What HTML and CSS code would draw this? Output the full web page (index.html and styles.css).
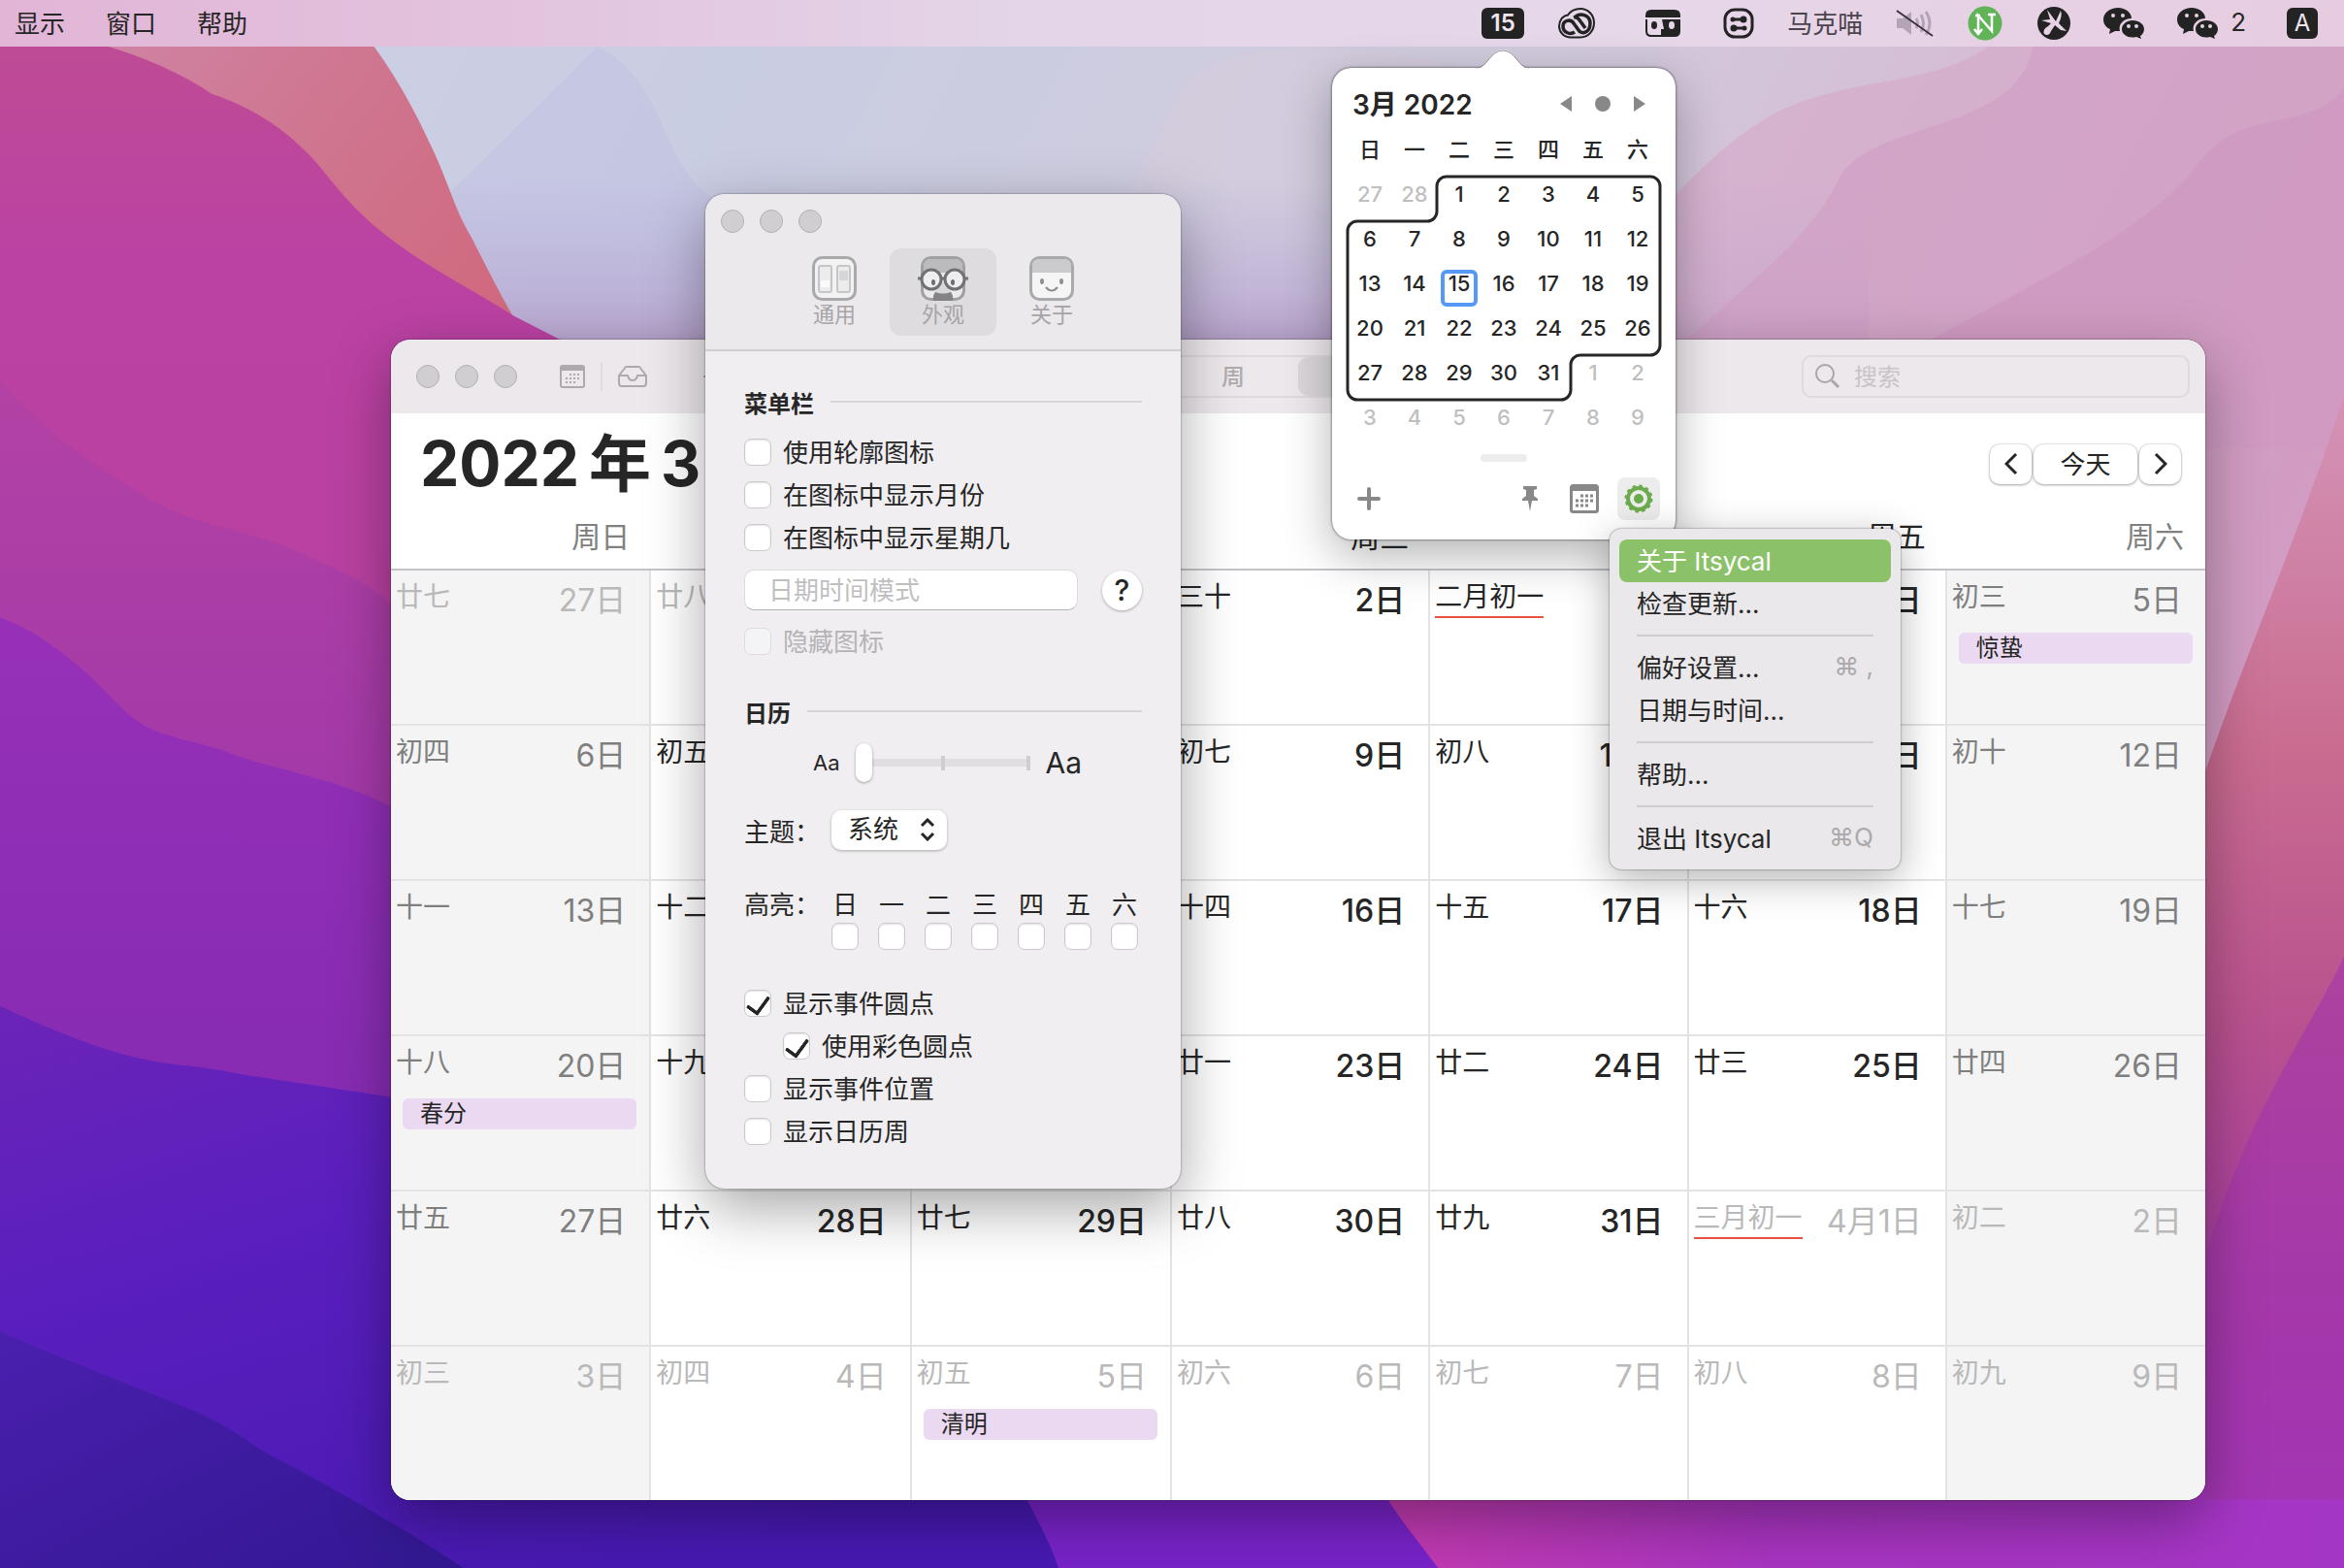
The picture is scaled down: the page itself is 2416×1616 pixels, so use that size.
FILE: index.html
```html
<!DOCTYPE html>
<html lang="zh-CN">
<head>
    <meta charset="UTF-8">
    <meta name="viewport" content="width=device-width, initial-scale=1.0">
    <title>日历</title>
    <link rel="stylesheet" href="styles.css">
</head>
<body>

    <!-- wallpaper -->
    <svg class="wallpaper" viewBox="0 0 1568 1049" preserveAspectRatio="none" aria-hidden="true">
        <defs>
            <linearGradient id="sky" x1="0" y1="0" x2="1" y2="0.35">
                <stop offset="0" stop-color="#cdd0e6"/>
                <stop offset="0.3" stop-color="#c9cde2"/>
                <stop offset="0.6" stop-color="#d2cbdd"/>
                <stop offset="1" stop-color="#d9a9c9"/>
            </linearGradient>
            <linearGradient id="haze" x1="0" y1="0" x2="0" y2="1">
                <stop offset="0" stop-color="#b6b0dc" stop-opacity="0"/>
                <stop offset="1" stop-color="#b9a2cc"/>
            </linearGradient>
            <linearGradient id="coral" x1="0" y1="0" x2="1" y2="0.6">
                <stop offset="0" stop-color="#cf84a4"/>
                <stop offset="0.5" stop-color="#cf7690"/>
                <stop offset="1" stop-color="#d06a80"/>
            </linearGradient>
            <linearGradient id="magenta" x1="0" y1="0" x2="0" y2="1">
                <stop offset="0" stop-color="#be4c94"/>
                <stop offset="0.35" stop-color="#bb42a3"/>
                <stop offset="1" stop-color="#b840a0"/>
            </linearGradient>
            <linearGradient id="plum" x1="0" y1="0" x2="0" y2="1">
                <stop offset="0" stop-color="#b342a4"/>
                <stop offset="1" stop-color="#9f37aa"/>
            </linearGradient>
            <linearGradient id="purple" x1="0" y1="0" x2="0" y2="1">
                <stop offset="0" stop-color="#9730b8"/>
                <stop offset="1" stop-color="#842bb2"/>
            </linearGradient>
            <linearGradient id="violet" x1="0" y1="0" x2="0.6" y2="1">
                <stop offset="0" stop-color="#6b24b8"/>
                <stop offset="0.4" stop-color="#5a1fbe"/>
                <stop offset="1" stop-color="#4719b2"/>
            </linearGradient>
            <linearGradient id="night" x1="0" y1="0" x2="1" y2="1">
                <stop offset="0" stop-color="#4a1fae"/>
                <stop offset="1" stop-color="#321892"/>
            </linearGradient>
            <linearGradient id="rose" x1="0" y1="0" x2="0" y2="1">
                <stop offset="0" stop-color="#d494b6"/>
                <stop offset="0.3" stop-color="#c96c90"/>
                <stop offset="0.55" stop-color="#b8508f"/>
                <stop offset="0.8" stop-color="#a63aa8"/>
                <stop offset="1" stop-color="#a234c2"/>
            </linearGradient>
            <linearGradient id="orchid" x1="0" y1="0" x2="1" y2="0">
                <stop offset="0" stop-color="#c43bb0"/>
                <stop offset="0.4" stop-color="#a834c0"/>
                <stop offset="1" stop-color="#a436c6"/>
            </linearGradient>
        </defs>
        <rect width="1568" height="1049" fill="url(#sky)"/>
        <path d="M400 31C450 60 440 110 480 135L900 240H340L300 130Z" fill="#c3c3e2" opacity=".6"/>
        <path d="M790 60C800 40 850 20 960 40L1200 240H700Z" fill="#d6cbdc" opacity=".5"/>
        <path d="M250 120H1250V240H250Z" fill="url(#haze)"/>
        <path d="M1020 240C1090 170 1130 110 1180 80S1290 60 1330 31H1568V300H1020Z" fill="#d6a9c9" opacity=".65"/>
        <path d="M1120 235C1180 180 1210 160 1230 120S1350 90 1360 31H1568V300H1120Z" fill="#d09ac2" opacity=".5"/>
        <path d="M1290 228C1380 180 1440 150 1470 110S1540 90 1568 60V700H1290Z" fill="#cf98c0" opacity=".8"/>
        <path d="M1568 265C1530 380 1500 440 1460 560V1049H1568Z" fill="url(#rose)"/>
        <path d="M1380 1049L1460 900C1490 760 1540 700 1568 640V1049Z" fill="#a336ae" opacity=".6"/>
        <path d="M60 20H242C265 50 278 75 289 99C300 122 304 140 315 158C324 176 334 196 344 213L360 240H200Z" fill="url(#coral)"/>
        <path d="M0 20H40L72 31C95 38 120 48 142 63C170 72 198 90 220 119C235 138 250 152 267 164C295 184 320 196 343 211L380 230V460H0Z" fill="url(#magenta)"/>
        <path d="M0 255C20 275 40 295 63 310C85 325 105 338 126 346S168 356 189 365S240 385 262 404L320 440V600H0Z" fill="url(#plum)"/>
        <path d="M0 413C20 420 36 432 53 446C70 460 85 482 104 489S140 498 157 505S230 522 262 540L320 570V780H0Z" fill="url(#purple)"/>
        <path d="M0 673C28 686 55 698 85 706S130 712 157 718L262 734L400 760V990H720V1049H0Z" fill="url(#violet)"/>
        <path d="M0 891C40 908 80 924 120 940S165 966 189 978S270 1022 310 1049H0Z" fill="url(#night)"/>
        <path d="M680 990H980V1049H708C702 1030 690 1010 680 990Z" fill="#7823c9"/>
        <path d="M920 990H1475V1003H1568V1049H962C948 1030 935 1015 920 990Z" fill="url(#orchid)"/>
    </svg>

    <!-- menu bar -->
    <header class="menubar">
        <nav class="menubar-left">
            <button>显示</button>
            <button>窗口</button>
            <button>帮助</button>
        </nav>
        <div class="menubar-right">
            <span class="badge">15</span>
            <svg width="40" height="34" viewBox="0 0 40 34">
                <path d="M14 31.500C7 31.500 2 26 2 20C2 14 6 9 11 8.500C14 4 19 2 24 2C32 2 38 8.500 38 16.500C38 25 32 31.500 24 31.500Z" fill="none" stroke="#232323" stroke-width="2"/>
                <path d="M19 10C23 6 34 8 34 17C34 27 25 29 22 24L17 17C14 12 6 14 6 20C6 27 14 29 18 26" fill="none" stroke="#232323" stroke-width="3.500"/>
                <path d="M17 11C20 10 22 12 24 15L29 22" fill="none" stroke="#232323" stroke-width="3.500"/>
            </svg>
            <svg class="face-icon" width="36" height="28" viewBox="0 0 36 28">
                <path d="M6 0H30Q36 0 36 6V8H0V6Q0 0 6 0Z" fill="#232323"/>
                <path d="M1 10V22Q1 27 6 27H18" fill="none" stroke="#232323" stroke-width="2"/>
                <path d="M17 10H36V22Q36 28 30 28H16V20H19Z" fill="#232323"/>
                <ellipse cx="9" cy="16" rx="3" ry="4" fill="#232323"/>
                <ellipse cx="27" cy="16" rx="3" ry="4" fill="#e4d6e8"/>
            </svg>
            <svg width="32" height="32" viewBox="0 0 32 32">
                <rect x="2" y="2" width="28" height="28" rx="10" fill="none" stroke="#232323" stroke-width="3"/>
                <path d="M9 12H20M12 21H23" stroke="#232323" stroke-width="3"/>
                <circle cx="21" cy="12" r="3.500" fill="#232323"/><circle cx="11" cy="21" r="3.500" fill="#232323"/>
                <circle cx="10" cy="12" r="2.500" fill="#232323"/><circle cx="22" cy="21" r="2.500" fill="#232323"/>
            </svg>
            <span class="menubar-name">马克喵</span>
            <svg width="40" height="30" viewBox="0 0 40 30">
                <path d="M1 10H7L16 3V27L7 20H1Z" fill="#b5a3b7"/>
                <path d="M21 10Q24 15 21 20M26 6Q31 15 26 24M31 3Q39 15 31 27" fill="none" stroke="#b5a3b7" stroke-width="3"/>
                <path d="M1 2L38 28" stroke="#3b343c" stroke-width="2"/>
            </svg>
            <svg width="38" height="36" viewBox="0 0 38 36">
                <circle cx="18" cy="18" r="17.500" fill="#60b357"/>
                <path d="M11 28V10L25 26V9M8 10H13M21 9H29M7 24L11 29L15 24" fill="none" stroke="#fff" stroke-width="2.500"/>
            </svg>
            <svg width="34" height="34" viewBox="0 0 34 34">
                <circle cx="17" cy="17" r="17" fill="#232323"/>
                <path d="M10 3L19 15L24 4Q26 9 22 17L30 25L24 24L18 19L14 25Q12 31 7 28Q5 23 11 20L14 17L4 14L13 13Z" fill="#e6d2e4"/>
            </svg>
            <svg width="42" height="32" viewBox="0 0 42 32">
                <path d="M15 0C23 0 29 5 29 11C21 11 15 17 17 24L12 24L6 27L7 22C2 20 0 16 0 12C0 5 7 0 15 0Z" fill="#232323"/>
                <path d="M30 13C37 13 42 17 42 22C42 25 40 28 38 29L39 32L34 30C26 32 19 28 19 22C19 17 24 13 30 13Z" fill="#232323"/>
                <circle cx="10" cy="8" r="2" fill="#e6d2e4"/><circle cx="20" cy="8" r="2" fill="#e6d2e4"/>
                <circle cx="26" cy="19" r="2" fill="#e6d2e4"/><circle cx="34" cy="19" r="2" fill="#e6d2e4"/>
            </svg>
            <span class="wechat-count">
                <svg width="42" height="32" viewBox="0 0 42 32">
                    <path d="M15 0C23 0 29 5 29 11C21 11 15 17 17 24L12 24L6 27L7 22C2 20 0 16 0 12C0 5 7 0 15 0Z" fill="#232323"/>
                    <path d="M30 13C37 13 42 17 42 22C42 25 40 28 38 29L39 32L34 30C26 32 19 28 19 22C19 17 24 13 30 13Z" fill="#232323"/>
                    <circle cx="10" cy="8" r="2" fill="#e6d2e4"/><circle cx="20" cy="8" r="2" fill="#e6d2e4"/>
                    <circle cx="26" cy="19" r="2" fill="#e6d2e4"/><circle cx="34" cy="19" r="2" fill="#e6d2e4"/>
                </svg>
                <span>2</span>
            </span>
            <span class="badge badge-input">A</span>
        </div>
    </header>

    <!-- calendar window -->
    <main class="window calendar">
        <div class="toolbar">
            <div class="toolbar-left">
                <div class="lights"><i></i><i></i><i></i></div>
                <svg width="26" height="24" viewBox="0 0 26 24">
                    <rect x="1" y="1" width="24" height="22" rx="2" fill="none" stroke="#aea9ad" stroke-width="2"/>
                    <path d="M1 1H25V6H1Z" fill="#aea9ad"/>
                    <path d="M10 10H21M6 14H21M6 18H17" stroke="#aea9ad" stroke-width="2" stroke-dasharray="2 2"/>
                </svg>
                <span class="divider"></span>
                <svg width="30" height="22" viewBox="0 0 30 22">
                    <path d="M1 10L8 1H22L29 10V18Q29 21 26 21H4Q1 21 1 18ZM1 10H10Q11 15 15 15T20 10H29" fill="none" stroke="#aea9ad" stroke-width="2" stroke-linejoin="round"/>
                </svg>
                <svg class="add-icon" width="24" height="24" viewBox="0 0 24 24">
                    <path d="M12 0V24M0 12H24" stroke="#aea9ad" stroke-width="2"/>
                </svg>
            </div>
            <div class="segmented">
                <button aria-label="日"></button>
                <button>周</button>
                <button class="selected" aria-label="月"></button>
                <button aria-label="年"></button>
            </div>
            <div class="toolbar-right">
                <label class="search">
                    <svg width="26" height="26" viewBox="0 0 26 26">
                        <circle cx="10" cy="10" r="9" fill="none" stroke="#aaa5a9" stroke-width="2"/>
                        <path d="M17 17L24 24" stroke="#aaa5a9" stroke-width="3"/>
                    </svg>
                    <input type="text" placeholder="搜索">
                </label>
            </div>
        </div>

        <div class="month-head">
            <h1>2022<span>年</span>3<span>月</span></h1>
            <div class="month-nav">
                <button aria-label="上个月"><svg width="14" height="24" viewBox="0 0 14 24"><path d="M12 2L2 12L12 22" fill="none" stroke="#262626" stroke-width="3"/></svg></button>
                <button class="today">今天</button>
                <button aria-label="下个月"><svg width="14" height="24" viewBox="0 0 14 24"><path d="M2 2L12 12L2 22" fill="none" stroke="#262626" stroke-width="3"/></svg></button>
            </div>
        </div>

        <table class="month">
            <thead>
                <tr><th>周日</th><th></th><th></th><th>周三</th><th></th><th>周五</th><th>周六</th></tr>
            </thead>
            <tbody>
                <tr>
                    <td class="other"><div class="day"><span>廿七</span><b>27日</b></div></td>
                    <td class="other"><div class="day"><span>廿八</span></div></td>
                    <td></td>
                    <td><div class="day"><span>三十</span><b>2日</b></div></td>
                    <td><div class="day"><span class="first">二月初一</span></div></td>
                    <td><div class="day"><span></span><b>4日</b></div></td>
                    <td><div class="day"><span>初三</span><b>5日</b></div><div class="event">惊蛰</div></td>
                </tr>
                <tr>
                    <td><div class="day"><span>初四</span><b>6日</b></div></td>
                    <td><div class="day"><span>初五</span></div></td>
                    <td></td>
                    <td><div class="day"><span>初七</span><b>9日</b></div></td>
                    <td><div class="day"><span>初八</span><b>10日</b></div></td>
                    <td><div class="day"><span></span><b>11日</b></div></td>
                    <td><div class="day"><span>初十</span><b>12日</b></div></td>
                </tr>
                <tr>
                    <td><div class="day"><span>十一</span><b>13日</b></div></td>
                    <td><div class="day"><span>十二</span></div></td>
                    <td></td>
                    <td><div class="day"><span>十四</span><b>16日</b></div></td>
                    <td><div class="day"><span>十五</span><b>17日</b></div></td>
                    <td><div class="day"><span>十六</span><b>18日</b></div></td>
                    <td><div class="day"><span>十七</span><b>19日</b></div></td>
                </tr>
                <tr>
                    <td><div class="day"><span>十八</span><b>20日</b></div><div class="event">春分</div></td>
                    <td><div class="day"><span>十九</span></div></td>
                    <td></td>
                    <td><div class="day"><span>廿一</span><b>23日</b></div></td>
                    <td><div class="day"><span>廿二</span><b>24日</b></div></td>
                    <td><div class="day"><span>廿三</span><b>25日</b></div></td>
                    <td><div class="day"><span>廿四</span><b>26日</b></div></td>
                </tr>
                <tr>
                    <td><div class="day"><span>廿五</span><b>27日</b></div></td>
                    <td><div class="day"><span>廿六</span><b>28日</b></div></td>
                    <td><div class="day"><span>廿七</span><b>29日</b></div></td>
                    <td><div class="day"><span>廿八</span><b>30日</b></div></td>
                    <td><div class="day"><span>廿九</span><b>31日</b></div></td>
                    <td class="other"><div class="day"><span class="first">三月初一</span><b>4月1日</b></div></td>
                    <td class="other"><div class="day"><span>初二</span><b>2日</b></div></td>
                </tr>
                <tr>
                    <td class="other"><div class="day"><span>初三</span><b>3日</b></div></td>
                    <td class="other"><div class="day"><span>初四</span><b>4日</b></div></td>
                    <td class="other"><div class="day"><span>初五</span><b>5日</b></div><div class="event">清明</div></td>
                    <td class="other"><div class="day"><span>初六</span><b>6日</b></div></td>
                    <td class="other"><div class="day"><span>初七</span><b>7日</b></div></td>
                    <td class="other"><div class="day"><span>初八</span><b>8日</b></div></td>
                    <td class="other"><div class="day"><span>初九</span><b>9日</b></div></td>
                </tr>
            </tbody>
        </table>
    </main>

    <!-- preferences window -->
    <section class="window prefs">
        <div class="prefs-head">
            <div class="lights"><i></i><i></i><i></i></div>
            <div class="tabs">
                <button>
                    <svg width="46" height="46" viewBox="0 0 46 46">
                        <rect x="1.500" y="1.500" width="43" height="43" rx="9" fill="#f3f2f3" stroke="#a9a8aa" stroke-width="3"/>
                        <rect x="7" y="10" width="13" height="27" rx="2" fill="#ececed" stroke="#c6c5c7" stroke-width="2"/>
                        <rect x="26" y="10" width="13" height="27" rx="2" fill="#ececed" stroke="#c6c5c7" stroke-width="2"/>
                        <path d="M9 25H18V32H9Z" fill="#fafafa"/><path d="M28 15H37V25H28Z" fill="#d6d5d7"/>
                    </svg>
                    通用
                </button>
                <button class="active">
                    <svg width="52" height="46" viewBox="0 0 52 46">
                        <rect x="4.500" y="1.500" width="43" height="43" rx="9" fill="#eae9eb" stroke="#a09fa1" stroke-width="3"/>
                        <path d="M6 17V10Q6 3 13 3H39Q46 3 46 10V17Z" fill="#bbbabc"/>
                        <path d="M23 27Q20 36 16 38H36Q32 36 29 27Z" fill="#d8d7d9"/>
                        <path d="M18 37Q26 40 34 37Q37 41 36 46H16Q15 41 18 37Z" fill="#838284"/>
                        <circle cx="14" cy="24" r="10" fill="#eeedef" stroke="#717072" stroke-width="3"/>
                        <circle cx="38" cy="24" r="10" fill="#eeedef" stroke="#717072" stroke-width="3"/>
                        <path d="M0 23H4M24 23H28M48 23H52" stroke="#717072" stroke-width="3"/>
                        <ellipse cx="16" cy="27" rx="2" ry="3" fill="#6d6c6e"/><ellipse cx="36" cy="27" rx="2" ry="3" fill="#6d6c6e"/>
                    </svg>
                    外观
                </button>
                <button>
                    <svg width="46" height="46" viewBox="0 0 46 46">
                        <rect x="1.500" y="1.500" width="43" height="43" rx="9" fill="#f6f5f6" stroke="#a9a8aa" stroke-width="3"/>
                        <path d="M3 17V10Q3 3 10 3H36Q43 3 43 10V17Z" fill="#cbcacc"/>
                        <ellipse cx="13" cy="26" rx="2" ry="3" fill="#8f8e90"/><ellipse cx="33" cy="26" rx="2" ry="3" fill="#8f8e90"/>
                        <path d="M17 32Q23 39 29 32" fill="none" stroke="#8f8e90" stroke-width="2"/>
                    </svg>
                    关于
                </button>
            </div>
        </div>
        <div class="prefs-body">
            <h2>菜单栏</h2>
            <label class="check"><input type="checkbox"><span>使用轮廓图标</span></label>
            <label class="check"><input type="checkbox"><span>在图标中显示月份</span></label>
            <label class="check"><input type="checkbox"><span>在图标中显示星期几</span></label>
            <div class="pattern">
                <input type="text" placeholder="日期时间模式" aria-label="日期时间模式">
                <button>?</button>
            </div>
            <label class="check disabled"><input type="checkbox" disabled><span>隐藏图标</span></label>

            <h2 class="second">日历</h2>
            <label class="size">
                <span>Aa</span>
                <input type="range" min="0" max="2" value="0">
                <span class="large">Aa</span>
            </label>
            <div class="theme">
                <label for="theme">主题：</label>
                <div class="select">
                    <select id="theme"><option>系统</option></select>
                    <svg width="16" height="24" viewBox="0 0 16 24"><path d="M2 8L8 2L14 8M2 16L8 22L14 16" fill="none" stroke="#262626" stroke-width="3"/></svg>
                </div>
            </div>
            <div class="highlight">
                <span>高亮：</span>
                <div class="highlight-days">
                    <label>日<input type="checkbox"></label>
                    <label>一<input type="checkbox"></label>
                    <label>二<input type="checkbox"></label>
                    <label>三<input type="checkbox"></label>
                    <label>四<input type="checkbox"></label>
                    <label>五<input type="checkbox"></label>
                    <label>六<input type="checkbox"></label>
                </div>
            </div>
            <label class="check"><input type="checkbox" checked><span>显示事件圆点</span></label>
            <label class="check indent"><input type="checkbox" checked><span>使用彩色圆点</span></label>
            <label class="check"><input type="checkbox"><span>显示事件位置</span></label>
            <label class="check"><input type="checkbox"><span>显示日历周</span></label>
        </div>
    </section>

    <!-- menu bar calendar -->
    <section class="popover">
        <svg class="arrow" width="54" height="20" viewBox="0 0 54 20">
            <path d="M0 20C12 19 14 0 27 0S42 19 54 20Z" fill="#fff"/>
            <path d="M0 19C12 18 14 1 27 1S42 18 54 19" fill="none" stroke="#8f8b93" stroke-width="1"/>
        </svg>
        <div class="popover-head">
            <h2>3月 2022</h2>
            <div class="popover-nav">
                <button aria-label="上个月"><svg width="12" height="16" viewBox="0 0 12 16"><path d="M12 0V16L0 8Z" fill="#888"/></svg></button>
                <button aria-label="今天"><svg width="16" height="16" viewBox="0 0 16 16"><circle cx="8" cy="8" r="8" fill="#888"/></svg></button>
                <button aria-label="下个月"><svg width="12" height="16" viewBox="0 0 12 16"><path d="M0 0V16L12 8Z" fill="#888"/></svg></button>
            </div>
        </div>
        <div class="mini-wrap">
            <table class="mini">
                <thead>
                    <tr><th>日</th><th>一</th><th>二</th><th>三</th><th>四</th><th>五</th><th>六</th></tr>
                </thead>
                <tbody>
                    <tr><td class="dim">27</td><td class="dim">28</td><td>1</td><td>2</td><td>3</td><td>4</td><td>5</td></tr>
                    <tr><td>6</td><td>7</td><td>8</td><td>9</td><td>10</td><td>11</td><td>12</td></tr>
                    <tr><td>13</td><td>14</td><td class="now">15</td><td>16</td><td>17</td><td>18</td><td>19</td></tr>
                    <tr><td>20</td><td>21</td><td>22</td><td>23</td><td>24</td><td>25</td><td>26</td></tr>
                    <tr><td>27</td><td>28</td><td>29</td><td>30</td><td>31</td><td class="dim">1</td><td class="dim">2</td></tr>
                    <tr><td class="dim">3</td><td class="dim">4</td><td class="dim">5</td><td class="dim">6</td><td class="dim">7</td><td class="dim">8</td><td class="dim">9</td></tr>
                </tbody>
            </table>
            <!-- line around the days of this month -->
            <svg class="outline" width="322" height="230" viewBox="0 0 322 230">
                <path d="M102 0H312A10 10 0 0 1 322 10V174A10 10 0 0 1 312 184H240A10 10 0 0 0 230 194V220A10 10 0 0 1 220 230H10A10 10 0 0 1 0 220V56A10 10 0 0 1 10 46H82A10 10 0 0 0 92 36V10A10 10 0 0 1 102 0Z" fill="none" stroke="#262626" stroke-width="3"/>
            </svg>
        </div>
        <div class="handle"></div>
        <div class="popover-foot">
            <button aria-label="新建"><svg width="24" height="24" viewBox="0 0 24 24"><path d="M12 2V22M2 12H22" stroke="#888" stroke-width="4" stroke-linecap="round"/></svg></button>
            <span class="spacer"></span>
            <button aria-label="固定"><svg width="16" height="26" viewBox="0 0 16 26"><path d="M1 0H15V3L12 4V10L16 13V15H10L8 26L6 15H0V13L4 10V4L1 3Z" fill="#888"/></svg></button>
            <button aria-label="打开日历"><svg width="30" height="30" viewBox="0 0 30 30"><rect x="1.500" y="1.500" width="27" height="27" rx="2" fill="#fff" stroke="#888" stroke-width="3"/><path d="M1 1H29V7H1Z" fill="#888"/><path d="M11 12H25M6 17H25M6 22H20" stroke="#888" stroke-width="3" stroke-dasharray="3 2"/></svg></button>
            <button class="gear" aria-label="设置">
                <svg width="30" height="30" viewBox="0 0 30 30">
                    <circle cx="15" cy="15" r="13" fill="none" stroke="#6cab4b" stroke-width="3" stroke-dasharray="3.400 3.400"/>
                    <circle cx="15" cy="15" r="11" fill="none" stroke="#6cab4b" stroke-width="4"/>
                    <circle cx="15" cy="15" r="5" fill="#6cab4b"/>
                </svg>
            </button>
        </div>
    </section>

    <!-- gear menu -->
    <div class="menu">
        <button class="hover">关于 Itsycal</button>
        <button>检查更新...</button>
        <hr>
        <button>偏好设置...<kbd>⌘ ,</kbd></button>
        <button>日期与时间...</button>
        <hr>
        <button>帮助...</button>
        <hr>
        <button>退出 Itsycal<kbd>⌘Q</kbd></button>
    </div>

</body>
</html>
```

FILE: styles.css
```css
* {
    box-sizing: border-box;
}

body {
    margin: 0;
    min-height: 100vh;
    position: relative;
    overflow: hidden;
    font-family: Inter, "Noto Sans CJK SC", sans-serif;
    font-size: 26px;
    color: #262626;
}

button, input, select {
    font-family: inherit;
    font-size: inherit;
    color: inherit;
}

button {
    border: none;
    background: none;
    padding: 0;
    margin: 0;
}

svg {
    display: block;
    flex: none;
}

h1, h2 {
    margin: 0;
}

.wallpaper {
    position: absolute;
    inset: 0;
    width: 100%;
    height: 100%;
}

/* menu bar */
.menubar {
    position: relative;
    height: 48px;
    display: flex;
    justify-content: space-between;
    align-items: center;
    padding: 0 27px 0 15px;
    background: linear-gradient(90deg, #e2b5d7, #e2c2dd 20%, #e4d6e9 45%, #e6d7e9 70%, #e7cce0);
}

.menubar-left {
    display: flex;
    gap: 42px;
    padding-bottom: 3px;
}

.menubar-right {
    display: flex;
    align-items: center;
    gap: 34px;
}

.menubar-name {
    padding-bottom: 3px;
    color: #4b444d;
}

.face-icon {
    margin: 0 10px 0 17px;
}

.badge {
    width: 44px;
    height: 32px;
    line-height: 32px;
    border-radius: 6px;
    background: #232323;
    color: #f0e4f0;
    font-size: 24px;
    font-weight: 600;
    text-align: center;
}

.badge-input {
    width: 32px;
    font-weight: 400;
}

.wechat-count {
    display: flex;
    align-items: center;
    gap: 13px;
    padding-right: 8px;
}

.wechat-count span {
    padding-bottom: 3px;
}

/* windows */
.window {
    position: absolute;
    border-radius: 20px;
    overflow: hidden;
    box-shadow: 0 0 2px rgba(0, 0, 0, 0.6), 0 20px 60px rgba(0, 0, 0, 0.35);
}

.lights {
    display: flex;
    gap: 16px;
}

.lights i {
    width: 24px;
    height: 24px;
    border-radius: 50%;
    background: #d1ced1;
    border: 1px solid #b3b0b3;
}

.calendar {
    top: 350px;
    left: 403px;
    right: 143px;
    background: #fff;
}

.toolbar {
    height: 76px;
    display: grid;
    grid-template-columns: 1fr auto 1fr;
    align-items: center;
    background: #ede8ec;
    padding: 0 16px 0 26px;
}

.toolbar-left {
    display: flex;
    align-items: center;
    gap: 16px;
}

.toolbar-left .lights {
    margin-right: 28px;
}

.divider {
    width: 2px;
    height: 28px;
    background: #dfdade;
}

.add-icon {
    margin-left: 42px;
}

.segmented {
    display: flex;
    height: 44px;
    margin-right: 10px;
    border: 2px solid #dfdade;
    border-radius: 10px;
    overflow: hidden;
}

.segmented button {
    width: 134px;
    padding-bottom: 3px;
    font-size: 24px;
    font-weight: 500;
    color: #b0abaf;
}

.segmented .selected {
    background: #dcd7db;
    border-radius: 10px;
}

.toolbar-right {
    display: flex;
    justify-content: flex-end;
}

.search {
    width: 400px;
    height: 44px;
    display: flex;
    align-items: center;
    gap: 14px;
    padding-left: 12px;
    border: 2px solid #dfdade;
    border-radius: 10px;
    font-size: 24px;
}

.search input {
    flex: 1;
    min-width: 0;
    border: none;
    background: none;
    padding: 0;
}

.search input::placeholder {
    color: #c9c4c8;
}

.month-head {
    height: 104px;
    display: flex;
    justify-content: space-between;
    align-items: center;
    padding: 0 25px 0 30px;
}

.month-head h1 {
    font-size: 64px;
    line-height: 80px;
    font-weight: 700;
}

.month-head h1 span {
    margin: 0 10px;
}

.month-nav {
    display: flex;
    gap: 2px;
}

.month-nav button {
    width: 43px;
    height: 41px;
    display: flex;
    align-items: center;
    justify-content: center;
    border-radius: 10px;
    background: #fff;
    box-shadow: 0 0 2px rgba(0, 0, 0, 0.25), 0 1px 3px rgba(0, 0, 0, 0.3);
}

.month-nav .today {
    width: 107px;
    padding-bottom: 3px;
}

.month {
    width: 100%;
    table-layout: fixed;
    border-collapse: separate;
    border-spacing: 0;
}

.month th {
    height: 58px;
    padding: 0 22px 10px 0;
    font-size: 30px;
    line-height: 40px;
    font-weight: 400;
    text-align: right;
    border-bottom: 2px solid #c5c3c9;
}

.month th:nth-child(-n+3) {
    width: 14.35%;
}

.month th:first-child, .month th:last-child {
    color: #808080;
}

.month td {
    height: 160px;
    padding: 7px 0 0;
    vertical-align: top;
    border-right: 2px solid #e3e3e3;
    border-bottom: 2px solid #e3e3e3;
}

.month td:first-child, .month td:last-child {
    background: #f4f4f4;
    color: #7f7f7f;
}

.month td:last-child {
    border-right: none;
}

.month tr:last-child td {
    height: 158px;
    border-bottom: none;
}

.month td.other {
    color: #b9b9b9;
}

.day {
    display: flex;
    justify-content: space-between;
    padding: 0 24px 0 5px;
}

.day span {
    height: 42px;
    font-size: 28px;
    line-height: 40px;
}

.day .first {
    border-bottom: 2px solid #e8533f;
}

.day b {
    font-size: 32px;
    line-height: 48px;
    font-weight: 500;
}

.other .day b, td:first-child .day b, td:last-child .day b {
    font-weight: 400;
}

.event {
    height: 32px;
    margin: 9px 13px 0 12px;
    padding-left: 18px;
    border-radius: 6px;
    background: #ebd9f2;
    color: #262626;
    font-size: 24px;
    line-height: 32px;
}

/* preferences */
.prefs {
    top: 200px;
    left: 727px;
    width: 490px;
    background: #f0eef1;
}

.prefs-head {
    height: 162px;
    padding: 16px;
    background: #ebe9ec;
    border-bottom: 2px solid #d0ced1;
}

.tabs {
    display: flex;
    justify-content: center;
    gap: 2px;
    margin-top: 16px;
}

.tabs button {
    width: 110px;
    height: 90px;
    display: flex;
    flex-direction: column;
    align-items: center;
    padding-top: 8px;
    border-radius: 12px;
    font-size: 22px;
    line-height: 28px;
    color: #a6a4a7;
}

.tabs .active {
    background: #dedcdf;
}

.prefs-body {
    padding: 34px 40px 37px;
}

.prefs-body h2 {
    display: flex;
    align-items: center;
    gap: 17px;
    height: 36px;
    margin-bottom: 12px;
    font-size: 24px;
    font-weight: 700;
}

.prefs-body h2::after {
    content: "";
    flex: 1;
    height: 2px;
    background: #d7d5d8;
}

.prefs-body h2.second {
    margin-top: 32px;
    font-weight: 600;
}

.check {
    display: flex;
    align-items: center;
    gap: 12px;
    height: 44px;
}

.check span {
    padding-bottom: 3px;
}

.indent {
    margin-left: 40px;
}

.disabled {
    color: #b5b3b6;
}

input[type="checkbox"] {
    appearance: none;
    flex: none;
    width: 28px;
    height: 28px;
    margin: 0;
    border: 1px solid #cbc9cc;
    border-radius: 7px;
    background: #fff;
    display: flex;
    justify-content: center;
    box-shadow: inset 0 1px 2px rgba(0, 0, 0, 0.12);
}

input[type="checkbox"]:disabled {
    background: #f4f3f5;
    border-color: #dddbde;
    box-shadow: none;
}

input[type="checkbox"]:checked::before {
    content: "";
    width: 11px;
    height: 19px;
    margin-top: 1px;
    border: solid #262626;
    border-width: 0 4px 4px 0;
    border-radius: 2px;
    transform: rotate(36deg);
}

.pattern {
    display: flex;
    justify-content: space-between;
    align-items: center;
    margin: 10px 0 9px;
    height: 44px;
}

.pattern input {
    width: 344px;
    height: 42px;
    padding: 0 24px;
    border: 1px solid #dddbde;
    border-bottom-color: #b5b3b6;
    border-radius: 10px;
    background: #fff;
}

.pattern input::placeholder {
    color: #bfbfbf;
}

.pattern button {
    width: 41px;
    height: 41px;
    border-radius: 50%;
    background: #fff;
    font-size: 30px;
    line-height: 40px;
    font-weight: 500;
    box-shadow: 0 1px 3px rgba(0, 0, 0, 0.3);
}

.size {
    display: flex;
    align-items: center;
    gap: 16px;
    height: 44px;
    margin-top: 13px;
    padding-left: 71px;
    font-size: 22px;
}

.size .large {
    font-size: 30px;
}

/* slider with the tick marks drawn behind the track */
.size input {
    appearance: none;
    width: 180px;
    height: 40px;
    margin: 0;
    background:
        linear-gradient(#cfcdd0, #cfcdd0) 50% 50% / 4px 15px no-repeat,
        linear-gradient(#cfcdd0, #cfcdd0) 100% 50% / 4px 15px no-repeat,
        linear-gradient(#e0dee1, #e0dee1) 50% 50% / 100% 8px no-repeat;
}

.size input::-webkit-slider-thumb {
    appearance: none;
    width: 17px;
    height: 40px;
    border-radius: 9px;
    background: #fff;
    box-shadow: 0 1px 3px rgba(0, 0, 0, 0.35);
}

.theme {
    display: flex;
    align-items: center;
    height: 44px;
    margin-top: 25px;
}

.theme label, .highlight > span {
    width: 90px;
    white-space: nowrap;
}

.select {
    position: relative;
}

.select select {
    appearance: none;
    width: 119px;
    height: 41px;
    padding: 0 17px 2px;
    border: none;
    border-radius: 10px;
    background: #fff;
    box-shadow: 0 1px 3px rgba(0, 0, 0, 0.3);
}

.select svg {
    position: absolute;
    right: 12px;
    top: 8px;
    pointer-events: none;
}

.highlight {
    display: flex;
    margin: 38px 0 33px;
    line-height: 36px;
}

.highlight-days {
    display: flex;
    gap: 20px;
}

.highlight-days label {
    display: flex;
    flex-direction: column;
    align-items: center;
    width: 28px;
}

/* menu bar calendar */
.popover {
    position: absolute;
    top: 70px;
    right: 689px;
    width: 354px;
    padding: 16px 16px 20px;
    border-radius: 20px;
    background: #fff;
    box-shadow: 0 0 3px rgba(0, 0, 0, 0.7), 0 16px 50px rgba(0, 0, 0, 0.3);
}

.arrow {
    position: absolute;
    left: 149px;
    top: -19px;
}

.popover-head {
    display: flex;
    justify-content: space-between;
    align-items: center;
    height: 42px;
    padding: 0 15px 0 5px;
}

.popover-head h2 {
    padding-bottom: 3px;
    font-size: 28px;
    font-weight: 600;
}

.popover-nav {
    display: flex;
    gap: 24px;
}

.mini-wrap {
    position: relative;
}

.mini {
    width: 322px;
    table-layout: fixed;
    border-collapse: separate;
    border-spacing: 0;
    text-align: center;
    font-size: 22px;
    line-height: 30px;
    font-weight: 500;
}

.mini th {
    height: 54px;
    padding: 0 0 3px;
    font-weight: 500;
}

.mini td {
    height: 46px;
    padding: 0 0 10px;
}

.mini .dim {
    color: #bfbfbf;
}

.mini .now {
    position: relative;
}

.mini .now::after {
    content: "";
    position: absolute;
    inset: 4px;
    border: 4px solid #5599f5;
    border-radius: 6px;
}

.outline {
    position: absolute;
    left: 0;
    top: 54px;
    overflow: visible;
}

.handle {
    width: 48px;
    height: 8px;
    margin: 10px auto 16px;
    border-radius: 4px;
    background: #ececec;
}

.popover-foot {
    display: flex;
    align-items: center;
    gap: 33px;
    height: 44px;
    padding-left: 10px;
}

.spacer {
    flex: 1;
}

.popover-foot .gear {
    width: 44px;
    height: 44px;
    margin-left: -14px;
    padding: 7px;
    border-radius: 8px;
    background: #ececec;
}

/* gear menu */
.menu {
    position: absolute;
    top: 545px;
    right: 457px;
    width: 300px;
    padding: 11px 10px 10px;
    border-radius: 12px;
    background: #eae8ea;
    box-shadow: 0 0 2px rgba(0, 0, 0, 0.6), 0 10px 40px rgba(0, 0, 0, 0.3);
}

.menu button {
    display: flex;
    justify-content: space-between;
    align-items: center;
    width: 100%;
    height: 44px;
    padding: 0 18px 3px;
    border-radius: 8px;
}

.menu .hover {
    background: #8bc269;
    color: #fff;
}

.menu hr {
    height: 2px;
    margin: 10px 18px;
    border: none;
    background: #cfcdcf;
}

.menu kbd {
    font-family: inherit;
    color: #acaaac;
}
```
